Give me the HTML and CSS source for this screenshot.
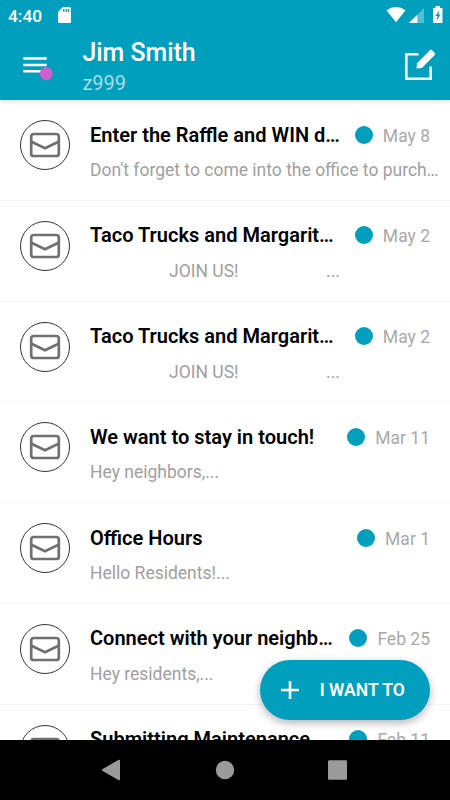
FILE: index.html
```html
<!DOCTYPE html>
<html lang="en">
<head>
<meta charset="utf-8">
<title>Messages</title>
<link rel="stylesheet" href="styles.css">
</head>
<body>
<svg width="0" height="0" class="defs">
  <symbol id="mail" viewBox="0 0 50 50">
    <circle cx="25" cy="25" r="24.5" fill="none" stroke="#333" stroke-width="1"/>
    <rect x="11.2" y="14" width="27.6" height="22" rx="2.6" fill="none" stroke="#707070" stroke-width="2.7"/>
    <path d="M11.5 21.7 L25 28.3 L38.5 21.7" fill="none" stroke="#707070" stroke-width="2.7"/>
  </symbol>
</svg>
<div class="screen">
  <header class="header">
    <div class="status">
      <span class="clock">4:40</span>
      <svg class="sd" width="14" height="16" viewBox="0 0 14 16"><path d="M4.8 0H11.5Q13 0 13 1.5V14.5Q13 16 11.5 16H1.5Q0 16 0 14.5V5Z" fill="#fff"/><path d="M5.8 2v3M8.3 2v3M10.7 2v3" stroke="#009fbe" stroke-width="1.3"/></svg>
      <svg class="signals" width="58" height="18" viewBox="0 0 58 18"><path d="M.5 4.3Q10 -2.3 19.5 4.3L10 16.2Z" fill="#fff"/><path d="M23 17L38 2V17Z" fill="#fff" opacity=".32"/><path d="M23 17L31.3 8.7V17Z" fill="#fff"/><path d="M49.5 0H54V2H56.5V17H47V2H49.5Z" fill="#fff"/><path d="M53.3 4.5L49.3 10H51.5L50.5 15L54.5 8.6H52.3Z" fill="#009fbe"/></svg>
    </div>
    <div class="toolbar">
      <div class="menu">
        <svg width="32" height="26" viewBox="0 0 32 26"><path d="M1.3 2.5H24.7M1.3 9H24.7M1.3 15.3H24.7" stroke="#fff" stroke-width="2.4"/><circle cx="24.3" cy="17.6" r="6.5" fill="#d55ccb"/></svg>
      </div>
      <div class="user">
        <div class="name">Jim Smith</div>
        <div class="unit">z999</div>
      </div>
      <svg class="compose" width="32" height="32" viewBox="0 0 32 32"><path d="M14.5 5.3H2.3V29.7H26.7V17.5" fill="none" stroke="#fff" stroke-width="2.6"/><path d="M12.5 19.5L13 14.2L24.2 3L29 7.8L17.8 19Z" fill="#fff"/><path d="M24 3L26.2 1Q27 .2 27.8 1L31 4.2Q31.8 5 31 5.8L29 8Z" fill="#fff"/></svg>
    </div>
  </header>
  <main class="list">
    <article class="row"><svg class="icon"><use href="#mail"/></svg><div class="body"><div class="top"><h2>Enter the Raffle and WIN d…</h2><i class="dot"></i><time>May 8</time></div><p>Don't forget to come into the office to purch…</p></div></article>
    <article class="row"><svg class="icon"><use href="#mail"/></svg><div class="body"><div class="top"><h2>Taco Trucks and Margarit…</h2><i class="dot"></i><time>May 2</time></div><p class="split"><span>JOIN US!</span><span>...</span></p></div></article>
    <article class="row"><svg class="icon"><use href="#mail"/></svg><div class="body"><div class="top"><h2>Taco Trucks and Margarit…</h2><i class="dot"></i><time>May 2</time></div><p class="split"><span>JOIN US!</span><span>...</span></p></div></article>
    <article class="row"><svg class="icon"><use href="#mail"/></svg><div class="body"><div class="top"><h2>We want to stay in touch!</h2><i class="dot"></i><time>Mar 11</time></div><p>Hey neighbors,...</p></div></article>
    <article class="row"><svg class="icon"><use href="#mail"/></svg><div class="body"><div class="top"><h2>Office Hours</h2><i class="dot"></i><time>Mar 1</time></div><p>Hello Residents!...</p></div></article>
    <article class="row"><svg class="icon"><use href="#mail"/></svg><div class="body"><div class="top"><h2>Connect with your neighb…</h2><i class="dot"></i><time>Feb 25</time></div><p>Hey residents,...</p></div></article>
    <article class="row"><svg class="icon"><use href="#mail"/></svg><div class="body"><div class="top"><h2>Submitting Maintenance</h2><i class="dot"></i><time>Feb 11</time></div></div></article>
    <button class="fab"><svg width="20" height="20" viewBox="0 0 20 20"><path d="M10 1V19M1 10H19" stroke="#fff" stroke-width="2.6"/></svg><span>I WANT TO</span></button>
  </main>
  <nav class="nav">
    <svg width="450" height="60" viewBox="0 0 450 60" fill="#9b9b9b"><path d="M102.3 29.2L118.3 20Q120 19.3 120 21V39Q120 40.7 118.3 40L102.3 30.8Q101.4 30 102.3 29.2Z"/><circle cx="225" cy="30" r="9.2"/><rect x="328" y="20.3" width="19" height="19.4" rx="1.2"/></svg>
  </nav>
</div>
</body>
</html>
```

FILE: styles.css
```css
* { box-sizing: border-box; margin: 0; padding: 0; }
body { font-family: Roboto, sans-serif; background: #fff; }
svg { display: block; flex: none; }
.defs { position: absolute; }
.screen { width: 450px; height: 800px; display: flex; flex-direction: column; overflow: hidden; }
.header { height: 100px; flex: none; background: #009fbe; color: #fff; position: relative; z-index: 1; box-shadow: 0 1px 5px rgba(0,0,0,.16); }
.status { height: 30px; display: flex; align-items: flex-start; padding: 6px 7px 0 8px; }
.clock { font-size: 17.3px; line-height: 20px; font-weight: 500; width: 50px; }
.sd { margin-top: 1px; }
.signals { margin-left: auto; margin-right: -1px; }
.toolbar { height: 70px; display: flex; padding: 0 14px 0 22px; }
.menu { width: 60.4px; padding-top: 26px; }
.user { flex: 1; padding-top: 7px; }
.name { font-size: 24.9px; line-height: 32px; font-weight: 500; }
.unit { font-size: 20px; line-height: 28px; color: #a6dce7; }
.compose { margin-top: 19px; }
.list { flex: 1; min-height: 0; overflow: hidden; position: relative; }
.row { height: 100.8px; border-bottom: 1px solid #f5f5f5; padding: 20px 10px 0 20px; display: flex; gap: 20px; }
.icon { width: 50px; height: 50px; }
.body { flex: 1; min-width: 0; }
.top { display: flex; align-items: center; height: 29px; padding-right: 10px; }
h2 { flex: 1; min-width: 0; font-size: 20.05px; line-height: 28px; font-weight: 600; color: #000; white-space: nowrap; }
.dot { flex: none; width: 18px; height: 18px; border-radius: 50%; background: #009fbe; margin: 0 10px 0 10px; }
time { font-size: 17.5px; line-height: 28px; color: #a9a9a9; padding-top: 2px; }
p { font-size: 17.5px; line-height: 24px; color: #a0a0a0; margin-top: 9px; white-space: nowrap; }
.split { display: flex; padding-left: 79px; gap: 87.5px; }
.fab { position: absolute; right: 20px; bottom: 20px; width: 170px; height: 60px; border: 0; border-radius: 30px; background: #009fbe; color: #fff; display: flex; align-items: center; padding-left: 19.7px; gap: 20px; font: 600 17.5px Roboto, sans-serif; white-space: nowrap; box-shadow: 0 3px 8px rgba(0,0,0,.3); }
.nav { height: 60px; flex: none; background: #000; position: relative; z-index: 2; }
```
